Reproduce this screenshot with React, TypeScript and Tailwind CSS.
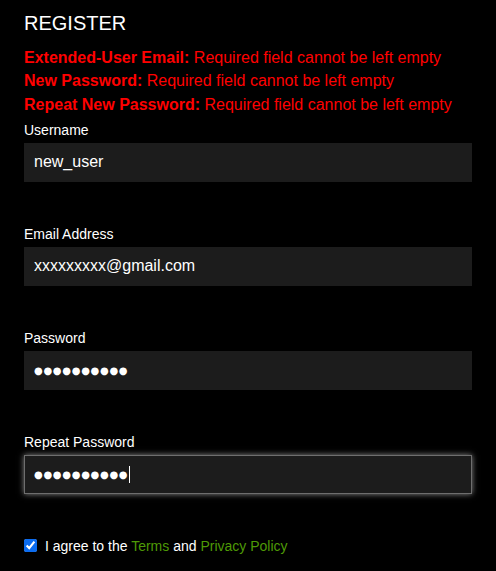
import { useState } from 'react';

const errors = [
  { field: 'Extended-User Email:', msg: 'Required field cannot be left empty' },
  { field: 'New Password:', msg: 'Required field cannot be left empty' },
  { field: 'Repeat New Password:', msg: 'Required field cannot be left empty' },
];

interface FieldProps {
  label: string;
  value: string;
  secret?: boolean;
  focused?: boolean;
}

function Field({ label, value, secret, focused }: FieldProps) {
  const [v, setV] = useState(value);
  const base =
    'block w-full h-[39px] px-[9px] bg-[#1c1c1c] text-white outline-none border ' +
    (secret ? "text-[10px] tracking-[0.7px] font-['DejaVu_Sans',sans-serif] " : 'text-[16px] ');
  return (
    <div className="mb-[44px] last:mb-0">
      <label className="block text-[14px] leading-[16px] text-white mb-[5px]">{label}</label>
      <div className="relative">
        <input
          type="text"
          value={v}
          onChange={(e) => setV(e.target.value)}
          className={
            focused
              ? base + 'border-[#6e6e6e] shadow-[0_0_6px_rgba(255,255,255,0.55)] caret-white'
              : base + 'border-transparent'
          }
        />
        {focused && <span className="absolute left-[105px] top-[11px] h-[17px] w-px bg-white" />}
      </div>
    </div>
  );
}

const dots = '\u25CF'.repeat(10);

export default function App() {
  const [agree, setAgree] = useState(true);
  return (
    <div className="min-h-[571px] bg-black px-[24px] pt-[11px] font-['Liberation_Sans',Arial,sans-serif]">
      <h1 className="text-[20px] leading-[24px] text-white">REGISTER</h1>
      <div className="mt-[11px] mb-[6px]">
        {errors.map((e) => (
          <div key={e.field} className="text-[16px] leading-[23.3px] text-[#ff0000]">
            <span className="font-bold">{e.field}</span> {e.msg}
          </div>
        ))}
      </div>
      <Field label="Username" value="new_user" />
      <Field label="Email Address" value="xxxxxxxxx@gmail.com" />
      <Field label="Password" value={dots} secret />
      <Field label="Repeat Password" value={dots} secret focused />
      <label className="mt-[40px] flex items-center gap-[8px] text-[14px] leading-[16px] text-white">
        <input
          type="checkbox"
          checked={agree}
          onChange={(e) => setAgree(e.target.checked)}
          className="w-[13px] h-[13px] m-0 accent-[#0b6cf0]"
        />
        <span>
          I agree to the <span className="text-[#4e9a06]">Terms</span> and{' '}
          <span className="text-[#4e9a06]">Privacy Policy</span>
        </span>
      </label>
    </div>
  );
}
